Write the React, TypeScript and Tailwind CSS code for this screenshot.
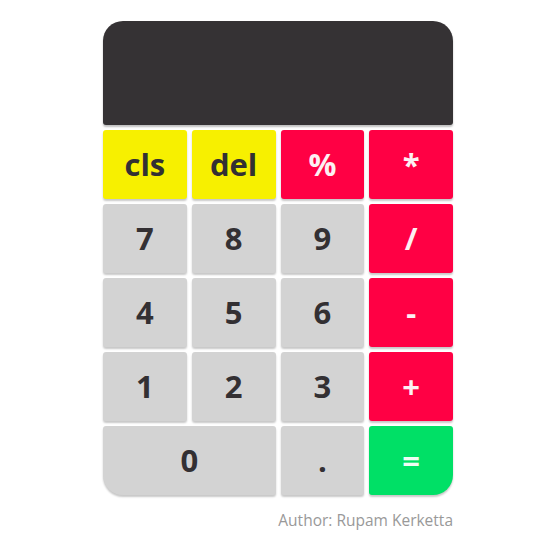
const keys: { label: string; kind: "fn" | "op" | "num" | "eq"; className?: string }[] = [
  { label: "cls", kind: "fn" },
  { label: "del", kind: "fn" },
  { label: "%", kind: "op" },
  { label: "*", kind: "op" },
  { label: "7", kind: "num" },
  { label: "8", kind: "num" },
  { label: "9", kind: "num" },
  { label: "/", kind: "op" },
  { label: "4", kind: "num" },
  { label: "5", kind: "num" },
  { label: "6", kind: "num" },
  { label: "-", kind: "op" },
  { label: "1", kind: "num" },
  { label: "2", kind: "num" },
  { label: "3", kind: "num" },
  { label: "+", kind: "op" },
  { label: "0", kind: "num", className: "col-span-2 rounded-bl-[20px]" },
  { label: ".", kind: "num" },
  { label: "=", kind: "eq", className: "rounded-br-[20px]" },
];

const kindStyles = {
  fn: "bg-[#f7f000] text-[#333033]",
  op: "bg-[#ff0044] text-[#fdf0f3]",
  num: "bg-[#d3d3d3] text-[#333033]",
  eq: "bg-[#00e066] text-[#f0fdf4]",
};

export default function App() {
  return (
    <div
      className="min-h-screen bg-white flex flex-col items-start pl-[103px] pt-[21px]"
      style={{ fontFamily: "'Open Sans', 'DejaVu Sans', sans-serif" }}
    >
      <div className="w-[350px]">
        <div className="h-[104px] rounded-t-[20px] rounded-b-[3px] bg-[#353234] shadow-[0_2px_2px_rgba(0,0,0,0.25)]" />
        <div className="mt-[5px] grid grid-cols-4 gap-[5px] auto-rows-[69px]">
          {keys.map((k) => (
            <button
              key={k.label}
              type="button"
              className={`flex items-center justify-center rounded-[3px] text-[31px] font-bold leading-none shadow-[0_2px_2px_rgba(0,0,0,0.22)] ${kindStyles[k.kind]} ${k.className ?? ""}`}
            >
              {k.label}
            </button>
          ))}
        </div>
        <p className="mt-[15px] text-right text-[15.5px] leading-[20px] text-[#999999]">
          Author: Rupam Kerketta
        </p>
      </div>
    </div>
  );
}
